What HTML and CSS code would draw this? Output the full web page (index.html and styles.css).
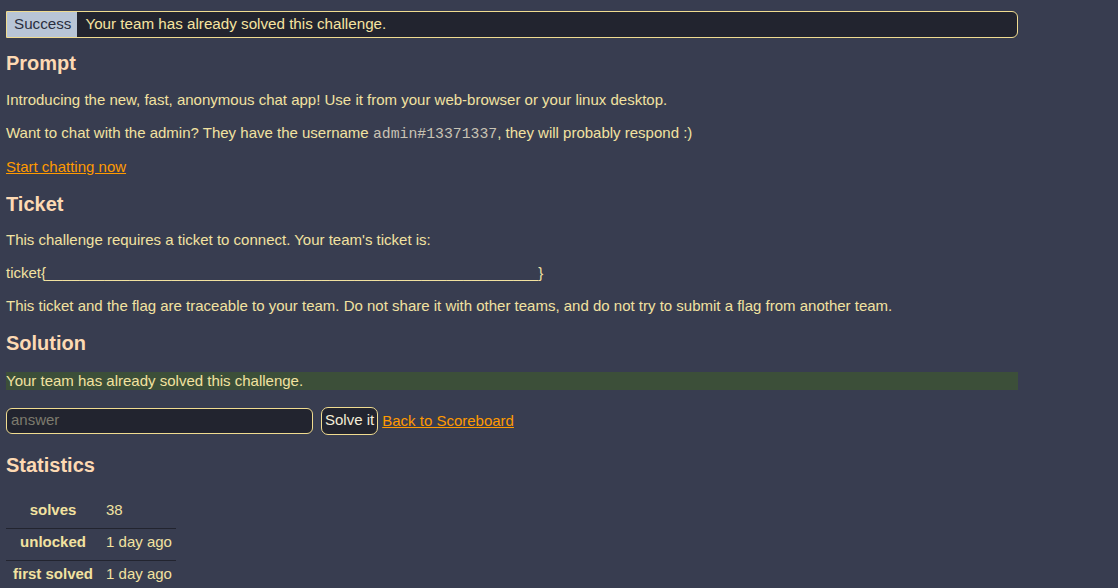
FILE: index.html
```html
<!DOCTYPE html>
<html>
<head>
<meta charset="utf-8">
<link rel="stylesheet" href="styles.css">
</head>
<body>
<div class="page">
  <div class="alert"><span class="alert-label">Success</span><span class="alert-text">Your team has already solved this challenge.</span></div>

  <h2 class="first-title">Prompt</h2>
  <p>Introducing the new, fast, anonymous chat app! Use it from your web-browser or your linux desktop.</p>
  <p>Want to chat with the admin? They have the username <code>admin#13371337</code>, they will probably respond :)</p>
  <p><a href="#">Start chatting now</a></p>

  <h2>Ticket</h2>
  <p>This challenge requires a ticket to connect. Your team's ticket is:</p>
  <p>ticket{___________________________________________________________}</p>
  <p>This ticket and the flag are traceable to your team. Do not share it with other teams, and do not try to submit a flag from another team.</p>

  <h2>Solution</h2>
  <div class="solved">Your team has already solved this challenge.</div>
  <form class="answer-form">
    <input class="answer" type="text" placeholder="answer">
    <button class="solve" type="button">Solve it</button>
    <a href="#">Back to Scoreboard</a>
  </form>

  <h2 class="stats-title">Statistics</h2>
  <table class="stats">
    <tr><th>solves</th><td>38</td></tr>
    <tr><th>unlocked</th><td>1 day ago</td></tr>
    <tr><th>first solved</th><td>1 day ago</td></tr>
  </table>
</div>
</body>
</html>
```

FILE: styles.css
```css
html, body {
  margin: 0;
  padding: 0;
  background: #383d50;
}
body {
  font-family: "Liberation Sans", Arial, sans-serif;
  font-size: 15px;
  line-height: 18px;
  color: #f2e2a0;
}
.page {
  width: 1012px;
  padding: 11px 6px 0 6px;
}
.alert {
  display: flex;
  border: 1px solid #f0dc90;
  border-radius: 0 6px 6px 0;
  background: #22242f;
  height: 25px;
  align-items: stretch;
  font-size: 15.2px;
}
.alert-label {
  background: #b8c5d6;
  color: #2a2f40;
  padding: 0 6px 2px 7px;
  display: flex;
  align-items: center;
}
.alert-text {
  padding: 0 8px 2px 8px;
  display: flex;
  align-items: center;
  color: #f6e3a0;
}
h2 {
  font-size: 20px;
  line-height: 24px;
  color: #fdd9b3;
  margin: 16px 0 13px 0;
}
.first-title {
  margin-top: 13px;
  margin-bottom: 16px;
}
p {
  margin: 15px 0;
}
code {
  font-family: "Liberation Mono", "Courier New", monospace;
  color: #c9c3b4;
  font-size: 14.8px;
}
a {
  color: #ff9a00;
}
.solved {
  background: #3c4f39;
  margin: 17px 0 17px 0;
  height: 18px;
}
.answer-form {
  display: flex;
  align-items: center;
  gap: 4px;
  margin: 0;
}
.answer {
  width: 307px;
  height: 26px;
  box-sizing: border-box;
  border: 1px solid #f0dc90;
  border-radius: 6px;
  background: #22242f;
  color: #f2e2a0;
  font-family: "Liberation Sans", Arial, sans-serif;
  font-size: 15px;
  padding: 0 4px 3px 4px;
  margin-right: 4px;
}
.answer::placeholder {
  color: #7d7b6e;
}
.solve {
  height: 28px;
  box-sizing: border-box;
  border: 1px solid #f0dc90;
  border-radius: 7px;
  background: #22242f;
  color: #f4ecd8;
  font-family: "Liberation Sans", Arial, sans-serif;
  font-size: 15px;
  padding: 0 3px 3px 3px;
}
.stats-title {
  margin-top: 18px;
}
.stats {
  border-collapse: collapse;
  margin-top: 20px;
}
.stats tr + tr th,
.stats tr + tr td {
  border-top: 1px solid #22242f;
}
.stats th {
  font-weight: bold;
  text-align: center;
  padding: 4px 7px 9px 7px;
  color: #f2e2a0;
}
.stats td {
  padding: 4px 4px 9px 6px;
  text-align: left;
}
```
